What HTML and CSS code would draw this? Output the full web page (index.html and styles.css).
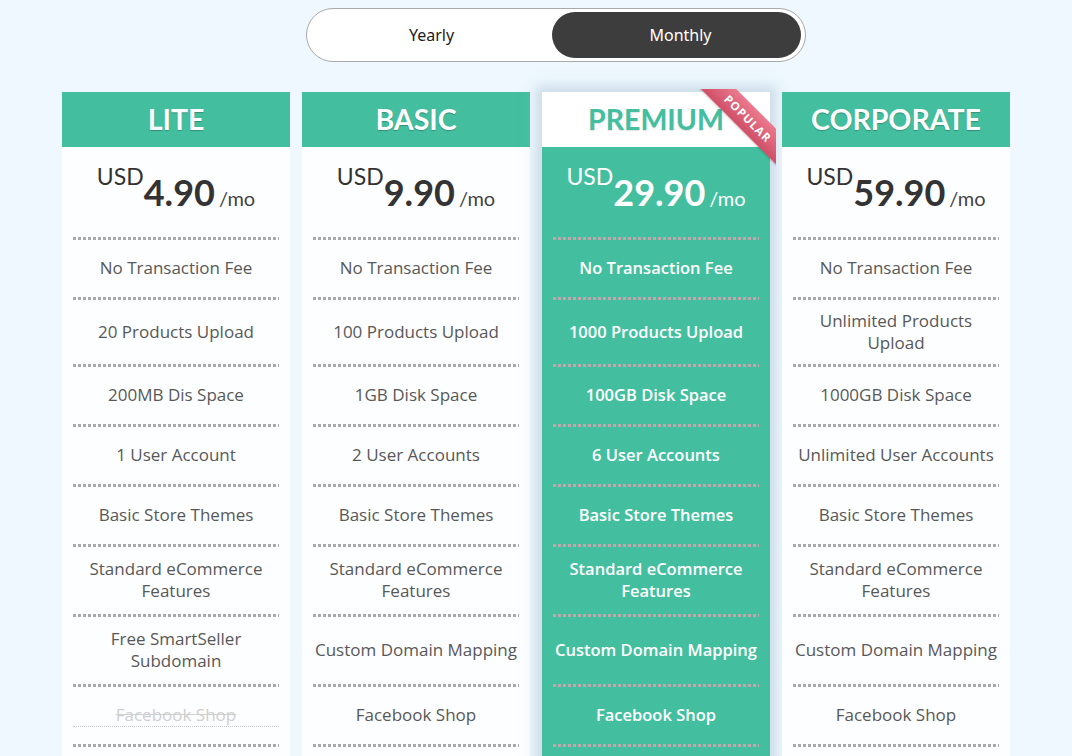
FILE: index.html
```html
<!DOCTYPE html>
<html lang="en">
<head>
<meta charset="utf-8">
<title>Pricing</title>
<link rel="stylesheet" href="styles.css">
</head>
<body>
<div class="page">
  <div class="toggle-wrap">
    <div class="toggle">
      <button class="opt">Yearly</button>
      <button class="opt active">Monthly</button>
    </div>
  </div>

  <div class="plans">
    <section class="plan">
      <h2 class="plan-head">LITE</h2>
      <div class="price"><span class="cur">USD</span><span class="amt">4.90</span><span class="per">/mo</span></div>
      <ul class="features">
        <li class="f"><span>No Transaction Fee</span></li>
        <li class="f f-2"><span>20 Products Upload</span></li>
        <li class="f"><span>200MB Dis Space</span></li>
        <li class="f"><span>1 User Account</span></li>
        <li class="f"><span>Basic Store Themes</span></li>
        <li class="f f-3"><span>Standard eCommerce<br>Features</span></li>
        <li class="f f-3"><span>Free SmartSeller<br>Subdomain</span></li>
        <li class="f off"><span>Facebook Shop</span></li>
        <li class="f"><span>&nbsp;</span></li>
      </ul>
    </section>

    <section class="plan">
      <h2 class="plan-head">BASIC</h2>
      <div class="price"><span class="cur">USD</span><span class="amt">9.90</span><span class="per">/mo</span></div>
      <ul class="features">
        <li class="f"><span>No Transaction Fee</span></li>
        <li class="f f-2"><span>100 Products Upload</span></li>
        <li class="f"><span>1GB Disk Space</span></li>
        <li class="f"><span>2 User Accounts</span></li>
        <li class="f"><span>Basic Store Themes</span></li>
        <li class="f f-3"><span>Standard eCommerce<br>Features</span></li>
        <li class="f f-3"><span>Custom Domain Mapping</span></li>
        <li class="f"><span>Facebook Shop</span></li>
        <li class="f"><span>&nbsp;</span></li>
      </ul>
    </section>

    <section class="plan plan-featured">
      <h2 class="plan-head">PREMIUM</h2>
      <div class="ribbon-box"><div class="ribbon">POPULAR</div></div>
      <div class="price"><span class="cur">USD</span><span class="amt">29.90</span><span class="per">/mo</span></div>
      <ul class="features">
        <li class="f"><span>No Transaction Fee</span></li>
        <li class="f f-2"><span>1000 Products Upload</span></li>
        <li class="f"><span>100GB Disk Space</span></li>
        <li class="f"><span>6 User Accounts</span></li>
        <li class="f"><span>Basic Store Themes</span></li>
        <li class="f f-3"><span>Standard eCommerce<br>Features</span></li>
        <li class="f f-3"><span>Custom Domain Mapping</span></li>
        <li class="f"><span>Facebook Shop</span></li>
        <li class="f"><span>&nbsp;</span></li>
      </ul>
    </section>

    <section class="plan">
      <h2 class="plan-head">CORPORATE</h2>
      <div class="price"><span class="cur">USD</span><span class="amt">59.90</span><span class="per">/mo</span></div>
      <ul class="features">
        <li class="f"><span>No Transaction Fee</span></li>
        <li class="f f-2"><span>Unlimited Products<br>Upload</span></li>
        <li class="f"><span>1000GB Disk Space</span></li>
        <li class="f"><span>Unlimited User Accounts</span></li>
        <li class="f"><span>Basic Store Themes</span></li>
        <li class="f f-3"><span>Standard eCommerce<br>Features</span></li>
        <li class="f f-3"><span>Custom Domain Mapping</span></li>
        <li class="f"><span>Facebook Shop</span></li>
        <li class="f"><span>&nbsp;</span></li>
      </ul>
    </section>
  </div>
</div>
</body>
</html>
```

FILE: styles.css
```css
* { box-sizing: border-box; }

html, body {
  margin: 0;
  padding: 0;
  background: #eef8fe;
}

body {
  font-family: "Open Sans", "Noto Sans", sans-serif;
  color: #555;
}

.page {
  width: 948px;
  margin: 0 auto;
  padding-top: 8px;
}

/* toggle */
.toggle-wrap {
  display: flex;
  justify-content: center;
  padding-left: 40px;
}

.toggle {
  width: 500px;
  height: 54px;
  border: 1px solid #a9a9a9;
  border-radius: 28px;
  background: #fff;
  padding: 3px 4px;
  display: grid;
  grid-template-columns: 241px 1fr;
}

.opt {
  border: 0;
  background: transparent;
  font-family: "Noto Sans", "Open Sans", sans-serif;
  font-size: 16px;
  font-weight: 400;
  color: #1e1e1e;
  border-radius: 23px;
  padding: 0;
  cursor: pointer;
}

.opt.active {
  background: #3d3d3d;
  color: #fff;
  padding-left: 8px;
}

/* plans */
.plans {
  display: flex;
  gap: 12px;
  margin-top: 30px;
}

.plan {
  position: relative;
  width: 228px;
  background: #fdfeff;
}

.plan-featured {
  background: #43bf9f;
  box-shadow: 0 0 12px 6px rgba(170, 190, 210, 0.5);
}

.plan-head {
  margin: 0;
  height: 55px;
  line-height: 55px;
  text-align: center;
  background: #43bf9f;
  color: #fff;
  font-family: Lato, sans-serif;
  font-weight: 700;
  font-size: 28.5px;
  text-shadow: 0 1px 1px rgba(0, 0, 0, 0.25);
}

.plan-featured .plan-head {
  background: #fff;
  color: #43bf9f;
  text-shadow: 0 1px 1px rgba(0, 0, 0, 0.12);
}

/* ribbon */
.ribbon-box {
  position: absolute;
  top: -3px;
  right: -6px;
  width: 81px;
  height: 81px;
  overflow: hidden;
}

.ribbon {
  position: absolute;
  left: -9px;
  top: 17px;
  width: 124px;
  height: 25px;
  line-height: 25px;
  transform: rotate(45deg);
  background: linear-gradient(#ec7a8e, #cf4f67);
  color: #fff;
  text-align: center;
  font-family: "Open Sans", sans-serif;
  font-weight: 700;
  font-size: 11.5px;
  letter-spacing: 1px;
  box-shadow: 0 1px 2px rgba(0, 0, 0, 0.2);
}

/* price */
.price {
  height: 90px;
  padding-top: 18px;
  text-align: center;
  font-family: Lato, sans-serif;
  font-size: 36px;
  line-height: 1;
  color: #333;
}

.cur {
  font-size: 23px;
  font-weight: 400;
  vertical-align: 21px;
}

.amt {
  font-weight: 700;
  font-size: 36px;
}

.per {
  font-size: 20px;
  font-weight: 400;
  margin-left: 4px;
  color: #444;
}

.plan-featured .price,
.plan-featured .per {
  color: #fff;
}

/* features */
.features {
  list-style: none;
  margin: 0;
  padding: 0 11px 0 11px;
}

.f {
  height: 60px;
  padding-top: 2px;
  display: flex;
  align-items: center;
  justify-content: center;
  text-align: center;
  white-space: nowrap;
  font-size: 17px;
  line-height: 22px;
  color: #585858;
  background-image: linear-gradient(to right, #a9a9a9 3px, transparent 3px);
  background-size: 5px 3px;
  background-repeat: repeat-x;
  background-position: 0 0;
}

.f-2 { height: 67px; }
.f-3 { height: 70px; }

.f.off span {
  display: block;
  width: 100%;
  color: #cfcfcf;
  text-decoration: line-through;
  border-bottom: 1px dotted #c8c8c8;
}

.plan-featured .f {
  color: #fff;
  font-weight: 600;
  font-size: 16.5px;
  background-image: linear-gradient(to right, #c4a7ae 3px, transparent 3px);
}
```
